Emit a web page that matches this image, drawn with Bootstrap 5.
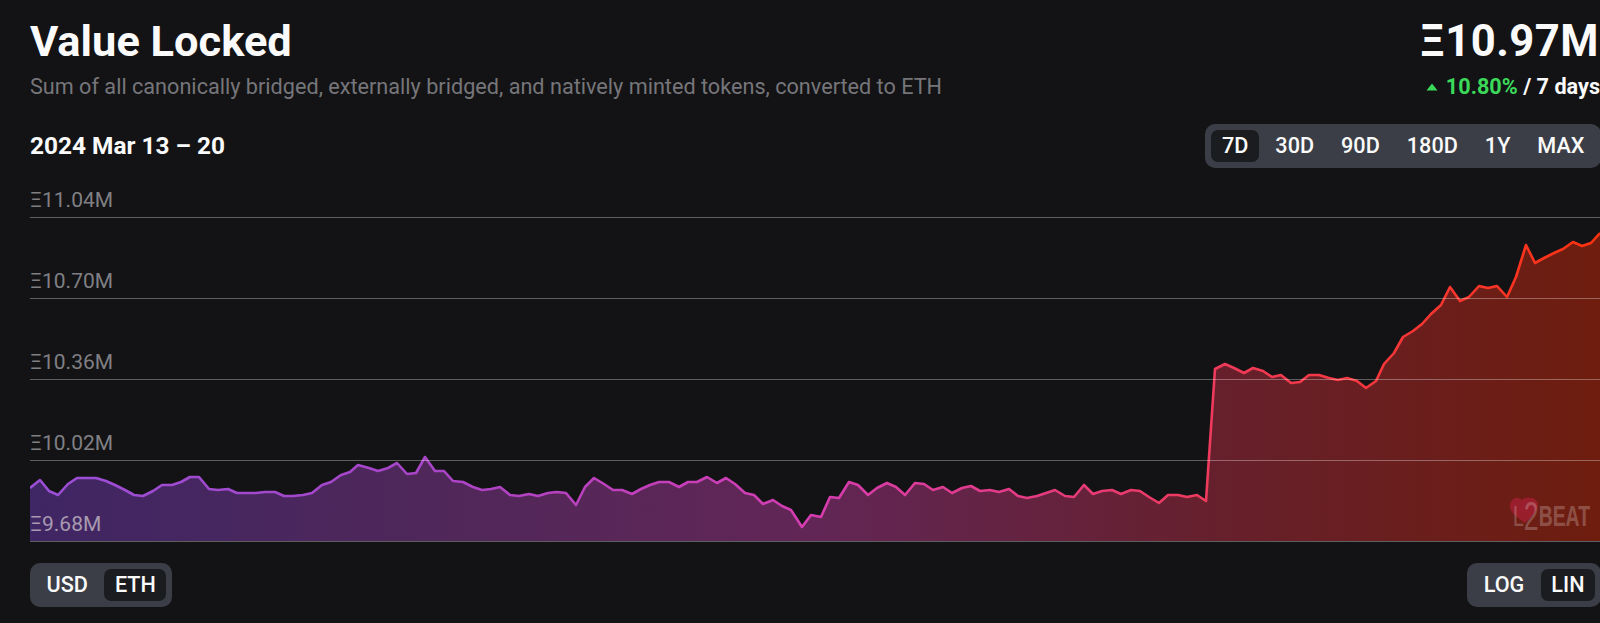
<!DOCTYPE html>
<html lang="en">
<head>
<meta charset="utf-8">
<title>Value Locked</title>
<link href="https://cdn.jsdelivr.net/npm/bootstrap@5.3.0/dist/css/bootstrap.min.css" rel="stylesheet">
<style>
html, body { height: 100%; overflow: hidden; }
body { background: #131315; color: #fafafa; font-family: Roboto, "Liberation Sans", sans-serif; }
.shell { padding: 15px 0 0 30px; width: 1600px; }
.title-main { font-size: 43.4px; line-height: 54px; font-weight: 700; margin: 0; white-space: nowrap; }
.title-sub { font-size: 21.65px; line-height: 28px; color: #76767a; margin: 4px 0 0; white-space: nowrap; }
.total { font-size: 43.6px; line-height: 54px; font-weight: 700; margin: 0; padding-right: 1px; white-space: nowrap; letter-spacing: .5px; }
.delta { font-size: 21.65px; line-height: 28px; font-weight: 700; margin-top: 4px; white-space: nowrap; }
.delta-up { color: #3bd95a; }
.date-row { margin-top: 23px; height: 44px; }
.date-text { font-size: 24.4px; font-weight: 700; }
.seg { background: #3b3e46; border-radius: 10px; padding: 6px; height: 44px; gap: 6px; }
.seg-end { margin-right: -1px; }
.seg-item { height: 32px; padding: 0 10.5px; border-radius: 7px; font-size: 21.65px; font-weight: 500; line-height: 32px; color: #fafafa; }
.seg-on { background: #1b1c1f; }
.plot { height: 374px; }
.plot-svg { position: absolute; left: 0; top: 0; }
.tick { height: 81px; border-bottom: 1.5px solid rgba(255,255,255,.32); position: relative; }
.tick-first { height: 50px; }
.tick-label { position: absolute; left: 0; bottom: 4px; font-size: 21px; line-height: 26px; color: #808084; }
.tick-low { color: #a89ab0; }
.foot-row { margin-top: 21px; }
.mark-txt { font-family: "Liberation Sans Narrow", "Liberation Sans", sans-serif; fill: #fff; }
.mark-two { font-family: "Liberation Sans", sans-serif; }
</style>
</head>
<body>
<div class="shell">
  <div class="d-flex justify-content-between">
    <div>
      <h1 class="title-main">Value Locked</h1>
      <p class="title-sub">Sum of all canonically bridged, externally bridged, and natively minted tokens, converted to ETH</p>
    </div>
    <div class="text-end">
      <p class="total">Ξ10.97M</p>
      <div class="delta d-flex align-items-center justify-content-end">
        <svg width="12" height="8" viewBox="0 0 12 8" class="me-2"><path d="M6 .5 L11.5 7.5 H.5 Z" fill="#3bd95a"/></svg>
        <span class="delta-up">10.80%</span><span>&nbsp;/ 7 days</span>
      </div>
    </div>
  </div>
  <div class="d-flex justify-content-between align-items-center date-row">
    <div class="date-text">2024 Mar 13 – 20</div>
    <div class="seg seg-end d-flex">
      <div class="seg-item seg-on">7D</div>
      <div class="seg-item">30D</div>
      <div class="seg-item">90D</div>
      <div class="seg-item">180D</div>
      <div class="seg-item">1Y</div>
      <div class="seg-item">MAX</div>
    </div>
  </div>
  <div class="plot position-relative">
    <svg class="plot-svg" width="1570" height="378" viewBox="30 168 1570 378">
      <defs>
        <linearGradient id="lineGrad" gradientUnits="userSpaceOnUse" x1="30" y1="0" x2="1600" y2="0">
          <stop offset="0" stop-color="#9a4fd6"/>
          <stop offset=".25" stop-color="#a844c8"/>
          <stop offset=".5" stop-color="#d63cb0"/>
          <stop offset=".75" stop-color="#ef3a5c"/>
          <stop offset="1" stop-color="#ff3210"/>
        </linearGradient>
        <linearGradient id="fillGrad" gradientUnits="userSpaceOnUse" x1="30" y1="0" x2="1600" y2="0">
          <stop offset="0" stop-color="#3f2664"/>
          <stop offset=".25" stop-color="#4f275a"/>
          <stop offset=".5" stop-color="#622656"/>
          <stop offset=".75" stop-color="#66202d"/>
          <stop offset="1" stop-color="#6e1d0e"/>
        </linearGradient>
      </defs>
      <polygon fill="url(#fillGrad)" points="30,541 30,488 40,480 49,491 58,495 68,484 77,478 87,478 96,478 106,481 115,485 125,490 134,495 143,496 153,491 162,485 172,485 181,482 190,477 199,477 209,489 218,490 228,489 237,493 246,493 256,493 265,492 275,492 284,496 293,496 303,495 312,493 322,485 331,482 341,475 350,472 358,465 369,468 378,471 388,468 397,463 407,474 416,473 425,457 435,471 444,471 453,481 463,482 473,487 482,490 491,489 500,487 510,495 519,496 529,494 538,496 548,493 557,492 566,493 576,505 585,487 594,478 604,484 613,490 622,490 632,494 641,489 650,485 659,482 669,482 679,487 688,482 697,482 707,477 717,483 726,478 735,484 745,493 754,495 763,504 773,500 782,506 791,510 802,527 811,515 821,517 830,497 839,498 849,482 858,485 868,495 877,488 887,483 896,487 905,495 915,483 924,484 933,490 943,487 952,493 962,488 971,486 980,491 990,490 999,492 1009,489 1018,496 1027,498 1037,496 1046,493 1055,490 1065,496 1074,497 1084,485 1093,494 1102,491 1112,490 1121,494 1131,490 1140,491 1149,497 1159,503 1168,495 1178,495 1187,497 1197,495 1206,501 1215,369 1225,364 1234,368 1244,373 1253,368 1263,371 1272,377 1281,375 1291,383 1300,382 1309,375 1319,375 1329,378 1338,380 1347,378 1357,381 1366,388 1376,381 1384,364 1394,353 1403,337 1413,331 1422,324 1431,314 1441,305 1450,287 1460,301 1469,297 1479,286 1488,288 1497,286 1507,297 1516,277 1526,245 1535,263 1544,258 1554,253 1563,249 1573,242 1582,246 1591,243 1600,233 1600,541"/>
      <polyline fill="none" stroke="url(#lineGrad)" stroke-width="2.6" stroke-linejoin="round" points="30,488 40,480 49,491 58,495 68,484 77,478 87,478 96,478 106,481 115,485 125,490 134,495 143,496 153,491 162,485 172,485 181,482 190,477 199,477 209,489 218,490 228,489 237,493 246,493 256,493 265,492 275,492 284,496 293,496 303,495 312,493 322,485 331,482 341,475 350,472 358,465 369,468 378,471 388,468 397,463 407,474 416,473 425,457 435,471 444,471 453,481 463,482 473,487 482,490 491,489 500,487 510,495 519,496 529,494 538,496 548,493 557,492 566,493 576,505 585,487 594,478 604,484 613,490 622,490 632,494 641,489 650,485 659,482 669,482 679,487 688,482 697,482 707,477 717,483 726,478 735,484 745,493 754,495 763,504 773,500 782,506 791,510 802,527 811,515 821,517 830,497 839,498 849,482 858,485 868,495 877,488 887,483 896,487 905,495 915,483 924,484 933,490 943,487 952,493 962,488 971,486 980,491 990,490 999,492 1009,489 1018,496 1027,498 1037,496 1046,493 1055,490 1065,496 1074,497 1084,485 1093,494 1102,491 1112,490 1121,494 1131,490 1140,491 1149,497 1159,503 1168,495 1178,495 1187,497 1197,495 1206,501 1215,369 1225,364 1234,368 1244,373 1253,368 1263,371 1272,377 1281,375 1291,383 1300,382 1309,375 1319,375 1329,378 1338,380 1347,378 1357,381 1366,388 1376,381 1384,364 1394,353 1403,337 1413,331 1422,324 1431,314 1441,305 1450,287 1460,301 1469,297 1479,286 1488,288 1497,286 1507,297 1516,277 1526,245 1535,263 1544,258 1554,253 1563,249 1573,242 1582,246 1591,243 1600,233"/>
      <path d="M1522 500 C1517 495 1510 499 1510 506 C1510 513 1518 518 1525 523 C1529 519 1537 513 1538 505 C1538 498 1527 495 1522 500 Z" fill="#d0204a" opacity=".45"/>
      <text class="mark-txt" x="1513" y="526" font-size="29" opacity=".22" textLength="77" lengthAdjust="spacingAndGlyphs"><tspan>L</tspan><tspan class="mark-two" font-size="40" dy="4">2</tspan><tspan font-weight="700" dy="-4">BEAT</tspan></text>
    </svg>
    <div class="tick tick-first"><span class="tick-label">Ξ11.04M</span></div>
    <div class="tick"><span class="tick-label">Ξ10.70M</span></div>
    <div class="tick"><span class="tick-label">Ξ10.36M</span></div>
    <div class="tick"><span class="tick-label">Ξ10.02M</span></div>
    <div class="tick"><span class="tick-label tick-low">Ξ9.68M</span></div>
  </div>
  <div class="d-flex justify-content-between foot-row">
    <div class="seg d-flex">
      <div class="seg-item">USD</div>
      <div class="seg-item seg-on">ETH</div>
    </div>
    <div class="seg seg-end d-flex">
      <div class="seg-item">LOG</div>
      <div class="seg-item seg-on">LIN</div>
    </div>
  </div>
</div>
</body>
</html>
